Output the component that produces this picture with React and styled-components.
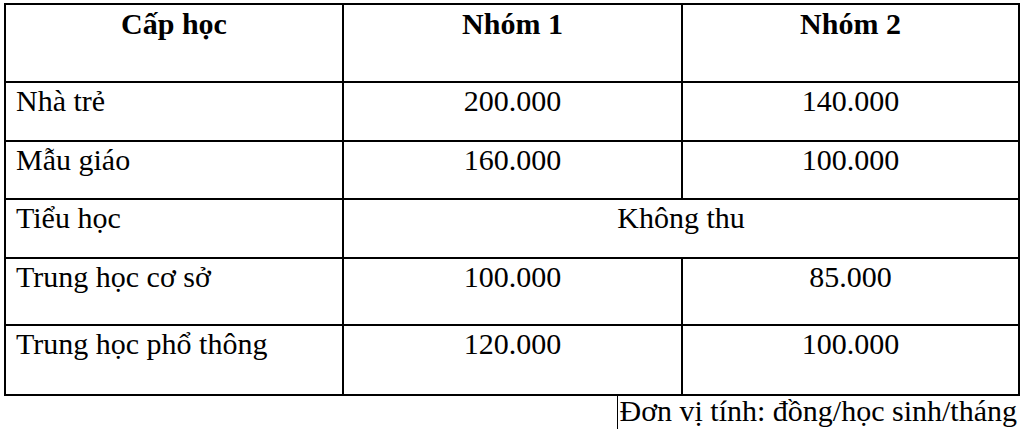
import React from "react";
import styled, { createGlobalStyle } from "styled-components";

const Global = createGlobalStyle`
  html, body { margin: 0; padding: 0; background: #fff; color: #000; }
`;

const Page = styled.div`
  padding: 3px 0 0 4px;
  width: 1014px;
  font-family: "Liberation Serif", "Times New Roman", serif;
`;

const Table = styled.table`
  width: 1014px;
  border-collapse: collapse;
  table-layout: fixed;
  font-family: "Liberation Serif", "Times New Roman", serif;
  font-size: 30px;
  color: #000;
`;

const Row = styled.tr`
  height: ${(p) => p.$h}px;
`;

const Cell = styled.td`
  border: 2px solid #000;
  vertical-align: top;
  padding: ${(p) => (p.$head ? "2px" : "1px")} 10px 0 10px;
  text-align: ${(p) => (p.$left ? "left" : "center")};
  font-weight: ${(p) => (p.$head ? 700 : 400)};
  line-height: 1.15;
  white-space: nowrap;
`;

const Note = styled.div`
  display: flex;
  justify-content: flex-end;
  font-family: "Liberation Serif", "Times New Roman", serif;
  font-size: 30px;
  line-height: 1.15;
  margin-top: -2px;
  padding-right: 1px;
`;

const Caret = styled.span`
  display: inline-block;
  width: 0;
  height: 35px;
  border-left: 1px solid #000;
  margin-right: 1px;
  vertical-align: top;
`;

const rows = [
  { name: "Nhà trẻ", a: "200.000", b: "140.000", h: 59 },
  { name: "Mẫu giáo", a: "160.000", b: "100.000", h: 58 },
  { name: "Tiểu học", span: "Không thu", h: 59 },
  { name: "Trung học cơ sở", a: "100.000", b: "85.000", h: 67 },
  { name: "Trung học phổ thông", a: "120.000", b: "100.000", h: 70 },
];

export default function App() {
  return (
    <>
      <Global />
      <Page>
        <Table>
          <colgroup>
            <col style={{ width: 338 }} />
            <col style={{ width: 339 }} />
            <col style={{ width: 337 }} />
          </colgroup>
          <tbody>
            <Row $h={78}>
              <Cell $head>Cấp học</Cell>
              <Cell $head>Nhóm 1</Cell>
              <Cell $head>Nhóm 2</Cell>
            </Row>
            {rows.map((r) => (
              <Row key={r.name} $h={r.h}>
                <Cell $left>{r.name}</Cell>
                {r.span ? (
                  <Cell colSpan={2}>{r.span}</Cell>
                ) : (
                  <>
                    <Cell>{r.a}</Cell>
                    <Cell>{r.b}</Cell>
                  </>
                )}
              </Row>
            ))}
          </tbody>
        </Table>
        <Note>
          <span>
            <Caret />
            Đơn vị tính: đồng/học sinh/tháng
          </span>
        </Note>
      </Page>
    </>
  );
}
